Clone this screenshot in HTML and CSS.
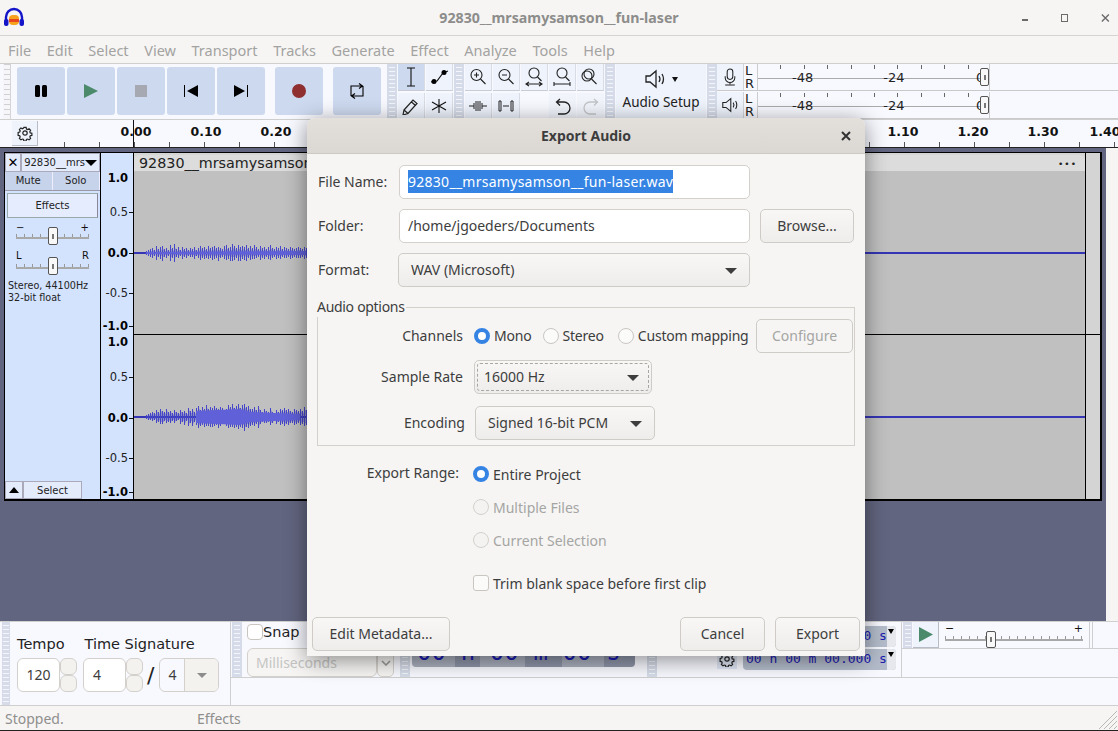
FILE: index.html
```html
<!DOCTYPE html>
<html>
<head>
<title>Export Audio</title>
<link rel="stylesheet" href="styles.css">
</head>
<body>
<svg width="0" height="0" class="defs">
  <symbol id="speaker" viewBox="0 0 22 20">
    <path d="M2 7h4l6-5v16l-6-5H2z" fill="none" stroke="currentColor" stroke-width="1.3"/>
    <path d="M15 7q2 3 0 6M18 5q3 5 0 10" fill="none" stroke="currentColor" stroke-width="1.3"/>
  </symbol>
  <symbol id="mic" viewBox="0 0 20 22">
    <rect x="6.5" y="1" width="7" height="13" rx="3.5" fill="none" stroke="currentColor" stroke-width="1.3"/>
    <path d="M4 10v2a6 6 0 0 0 12 0v-2M10 18v2M4 21h12" fill="none" stroke="currentColor" stroke-width="1.3"/>
  </symbol>
  <symbol id="gear" viewBox="0 0 16 16">
    <path d="M6.6 1.2h2.8l.4 2 1.5.7 1.8-1 1.9 2-1 1.7.6 1.5 2 .5v2.7l-2 .4-.6 1.5 1 1.7-1.9 1.9-1.8-1-1.5.6-.4 2H6.6l-.4-2-1.5-.6-1.8 1-1.9-1.9 1-1.7-.6-1.5-2-.4V7.6l2-.5.6-1.5-1-1.7 1.9-2 1.8 1 1.5-.7z" transform="translate(1.6 1.4) scale(.8)" fill="none" stroke="currentColor" stroke-width="1.5"/>
    <circle cx="8" cy="8" r="2.2" fill="none" stroke="currentColor" stroke-width="1.2"/>
  </symbol>
</svg>

<div class="window">
  <div class="titlebar">
    <svg class="app-logo" width="22" height="22" viewBox="0 0 22 22">
      <rect x="6" y="8" width="10" height="10" rx="4" fill="#f6a21c"/>
      <rect x="6" y="12" width="10" height="3" fill="#e8451c"/>
      <path d="M3 14V10a8 8 0 0 1 16 0v4" fill="none" stroke="#1414c8" stroke-width="2.4"/>
      <rect x="1" y="12" width="4.5" height="7" rx="2" fill="#1414c8"/>
      <rect x="16.5" y="12" width="4.5" height="7" rx="2" fill="#1414c8"/>
    </svg>
    <div class="title-text">92830__mrsamysamson__fun-laser</div>
    <div class="title-controls">
      <span class="wc-min"></span><span class="wc-max"></span>
      <svg width="10" height="10" viewBox="0 0 10 10"><path d="M1 1l8 8M9 1l-8 8" stroke="#6b6b6b" stroke-width="1.6"/></svg>
    </div>
  </div>

  <div class="menubar">
    <span>File</span><span>Edit</span><span>Select</span><span>View</span><span>Transport</span><span>Tracks</span><span>Generate</span><span>Effect</span><span>Analyze</span><span>Tools</span><span>Help</span>
  </div>

  <div class="toolbars">
    <div class="grip grip-first"></div>
    <div class="transport">
      <div class="tbtn"><svg width="14" height="14" viewBox="0 0 14 14"><rect x="1" y="1" width="5" height="12" rx="1.5"/><rect x="8" y="1" width="5" height="12" rx="1.5"/></svg></div>
      <div class="tbtn"><svg width="16" height="16" viewBox="0 0 16 16"><path d="M1 1l14 7-14 7z" fill="#4c8a6c"/></svg></div>
      <div class="tbtn"><svg width="12" height="12" viewBox="0 0 12 12"><rect width="12" height="12" fill="#a6a9b2"/></svg></div>
      <div class="tbtn"><svg width="14" height="14" viewBox="0 0 14 14"><path d="M0 1h1v12H0zM14 1v12L3 7z"/></svg></div>
      <div class="tbtn"><svg width="14" height="14" viewBox="0 0 14 14"><path d="M14 1h-1v12h1zM0 1v12l11-6z"/></svg></div>
      <div class="tbtn tbtn-gap"><svg width="14" height="14" viewBox="0 0 14 14"><circle cx="7" cy="7" r="7" fill="#8f2f30"/></svg></div>
      <div class="tbtn tbtn-gap"><svg width="16" height="18" viewBox="0 0 16 18" fill="none" stroke="#000" stroke-width="1.1"><path d="M2 14V4h11M10 1.500l3.500 2.500-3.500 2.500M14 4v10H3M6 11.500L2.500 14 6 16.500"/></svg></div>
    </div>
    <div class="grip"></div>
    <div class="tools">
      <div class="sbtn sbtn-on"><svg width="12" height="20" viewBox="0 0 12 20" fill="none" stroke="#111" stroke-width="1.1"><path d="M2 1h8M2 19h8M6 1v18"/></svg></div>
      <div class="sbtn"><svg width="22" height="16" viewBox="0 0 22 16"><path d="M3 13l6-1 6-8 5-2" fill="none" stroke="#111" stroke-width="1.2"/><circle cx="6" cy="12.5" r="2.5"/><circle cx="16" cy="3.5" r="2.5"/></svg></div>
      <div class="sbtn"><svg width="18" height="18" viewBox="0 0 18 18" fill="none" stroke="#222" stroke-width="1.2"><path d="M2 13l9-10 4 3.500-9 10-5 1.500zM9.500 5l4 3.500M2 13l4 3.500"/></svg></div>
      <div class="sbtn"><svg width="16" height="16" viewBox="0 0 16 16" fill="none" stroke="#111" stroke-width="1.1"><path d="M8 1v14M1 4l14 8M15 4L1 12"/></svg></div>
    </div>
    <div class="grip"></div>
    <div class="zoomtools">
      <div class="sbtn"><svg width="18" height="18" viewBox="0 0 18 18" fill="none" stroke="#222" stroke-width="1.1"><circle cx="7.5" cy="7" r="5.5"/><path d="M11.500 11l5 5M5 7h5M7.500 4.500v5"/></svg></div>
      <div class="sbtn"><svg width="18" height="18" viewBox="0 0 18 18" fill="none" stroke="#222" stroke-width="1.1"><circle cx="7.5" cy="7" r="5.5"/><path d="M11.500 11l5 5M5 7h5"/></svg></div>
      <div class="sbtn"><svg width="18" height="20" viewBox="0 0 18 20" fill="none" stroke="#222" stroke-width="1.1"><circle cx="9" cy="6" r="5"/><path d="M12.500 10l4 4M1 17h16M4 15l-3 2 3 2M14 15l3 2-3 2"/></svg></div>
      <div class="sbtn"><svg width="18" height="20" viewBox="0 0 18 20" fill="none" stroke="#222" stroke-width="1.1"><circle cx="9" cy="6" r="5"/><path d="M12.500 10l4 4M1 17h16M1 15v4M17 15v4"/></svg></div>
      <div class="sbtn"><svg width="18" height="18" viewBox="0 0 18 18" fill="none" stroke="#222" stroke-width="1.1"><circle cx="8" cy="6" r="5"/><circle cx="6" cy="8" r="5"/><path d="M10.500 11l5 5"/></svg></div>
      <div class="sbtn"><svg width="18" height="14" viewBox="0 0 18 14" fill="none" stroke="#222" stroke-width="1"><path d="M0 7h5M13 7h5M5 4v6M7 2v10M9 2v10M11 2v10M13 4v6"/></svg></div>
      <div class="sbtn"><svg width="18" height="14" viewBox="0 0 18 14" fill="none" stroke="#222" stroke-width="1"><path d="M2 2v10M4 2v10M2 2h2M2 12h2M6 7h6M14 2v10M16 2v10M14 2h2M14 12h2"/></svg></div>
      <div class="sbtn-blank"></div>
      <div class="sbtn sbtn-plain"><svg width="18" height="18" viewBox="0 0 18 18" fill="none" stroke="#222" stroke-width="1.3"><path d="M4 16h6a6 6 0 0 0 0-12H3M6 1L2.500 4 6 7.500"/></svg></div>
      <div class="sbtn sbtn-plain"><svg width="18" height="18" viewBox="0 0 18 18" fill="none" stroke="#c3c5c8" stroke-width="1.3"><path d="M14 16H8a6 6 0 0 1 0-12h7M12 1l3.500 3L12 7.500"/></svg></div>
    </div>
    <div class="grip"></div>
    <div class="audio-setup">
      <div class="as-icon"><svg width="22" height="20"><use href="#speaker"/></svg><span class="as-caret"></span></div>
      <div class="as-label">Audio Setup</div>
    </div>
    <div class="grip"></div>
    <div class="meters">
      <div class="meter-row">
        <div class="meter-btn"><svg width="16" height="18"><use href="#mic"/></svg></div>
        <div class="lr"><span>L</span><span>R</span></div>
        <div class="meter"><span>-48</span><span>-24</span><span class="meter-zero">0</span><i class="thumb thumb-meter"></i></div>
      </div>
      <div class="meter-row">
        <div class="meter-btn"><svg width="18" height="16"><use href="#speaker"/></svg></div>
        <div class="lr"><span>L</span><span>R</span></div>
        <div class="meter"><span>-48</span><span>-24</span><span class="meter-zero">0</span><i class="thumb thumb-meter"></i></div>
      </div>
    </div>
  </div>

  <div class="ruler">
    <div class="ruler-gear"><svg width="16" height="16"><use href="#gear"/></svg></div>
    <div class="ruler-scale">
      <span>0.00</span><span>0.10</span><span>0.20</span><div class="scale-gap"></div><span>1.10</span><span>1.20</span><span>1.30</span><span class="scale-last">1.40</span>
      <i class="playhead"></i>
    </div>
  </div>

  <div class="tracks">
    <div class="track">
      <div class="track-panel">
        <div class="track-head">
          <div class="track-close">&#10005;</div>
          <div class="track-name">92830__mrs<span class="caret-big"></span></div>
        </div>
        <div class="track-btns"><div>Mute</div><div>Solo</div></div>
        <div class="effects-btn">Effects</div>
        <div class="slider-marks"><span>&minus;</span><span>+</span></div>
        <div class="mini-slider"><i class="thumb thumb-mini"></i></div>
        <div class="slider-marks slider-marks-lr"><span>L</span><span>R</span></div>
        <div class="mini-slider"><i class="thumb thumb-mini"></i></div>
        <div class="track-info">Stereo, 44100Hz<br>32-bit float</div>
        <div class="track-foot">
          <div class="collapse-btn"><span class="caret-up"></span></div>
          <div class="select-btn">Select</div>
        </div>
      </div>
      <div class="vruler">
        <div class="vruler-ch vruler-top">
          <b>1.0</b><span>0.5</span><b>0.0</b><span>-0.5</span><b>-1.0</b>
        </div>
        <div class="vruler-ch vruler-bot">
          <b>1.0</b><span>0.5</span><b>0.0</b><span>-0.5</span><b>-1.0</b>
        </div>
      </div>
      <div class="clip-area">
        <div class="clip">
          <div class="clip-title"><span>92830__mrsamysamson__fun-laser</span><span class="clip-menu">&bull;&bull;&bull;</span></div>
          <svg class="wave" width="951" height="328" viewBox="134 171 951 328">
            <path class="wave-line" d="M134 253H1085M134 417H1085"/>
            <path id="ch1" class="wave-spike" d="M146 251V255M148 250V256M150 249V257M152 248V258M154 250V256M156 246V260M158 249V257M160 247V259M162 246V261M164 249V257M166 248V258M168 250V256M170 245V261M172 248V258M174 244V262M176 249V257M178 247V258M180 250V256M182 247V259M184 249V257M186 248V258M188 250V256M190 248V257M192 249V257M194 247V259M196 250V256M198 248V258M200 246V260M202 248V258M204 247V259M206 249V258M208 246V259M210 248V258M212 247V260M214 246V259M216 248V258M218 247V261M220 248V258M222 249V257M224 246V259M226 245V260M228 248V259M230 247V261M232 244V261M234 246V260M236 248V258M238 245V261M240 247V261M242 246V259M244 247V260M246 245V261M248 248V258M250 246V260M252 248V259M254 245V259M256 247V258M258 249V257M260 246V260M262 248V258M264 247V259M266 249V257M268 247V259M270 245V260M272 248V258M274 249V257M276 247V259M278 248V258M280 246V259M282 249V257M284 247V258M286 248V258M288 249V257M290 247V259M292 248V258M294 249V257M296 248V258M298 247V258M300 248V258M302 249V257M304 247V259M306 248V258"/>
            <use href="#ch1" transform="translate(1 126.5) scale(1 .5)"/>
            <path id="ch2" class="wave-spike" d="M146 415V419M148 414V420M150 413V420M152 412V421M154 413V420M156 410V423M158 412V422M160 409V424M162 411V424M164 412V421M166 409V423M168 412V422M170 411V423M172 413V421M174 410V423M176 412V421M178 413V420M180 410V424M182 412V422M184 411V425M186 413V421M188 408V426M190 411V423M192 409V426M194 412V422M196 408V425M198 406V428M200 410V426M202 407V425M204 409V427M206 405V426M208 409V426M210 407V427M212 408V427M214 406V426M216 408V425M218 409V428M220 407V426M222 408V424M224 411V424M226 409V426M228 405V428M230 407V427M232 404V427M234 408V428M236 406V427M238 404V429M240 408V427M242 405V428M244 404V431M246 407V427M248 406V428M250 409V426M252 409V425M254 407V426M256 410V424M258 406V428M260 410V424M262 412V422M264 409V423M266 411V423M268 412V422M270 408V425M272 412V423M274 413V421M276 410V424M278 412V422M280 409V425M282 410V424M284 408V426M286 410V424M288 409V425M290 411V423M292 412V423M294 409V425M296 410V424M298 411V423M300 409V425M302 411V424M304 407V426M306 410V425"/>
            <use href="#ch2" transform="translate(1 125.1) scale(1 .7)"/>
            <path class="wave-body" d="M196 411L240 409 250 412 300 414V420L250 422 240 425 196 423Z"/>
            <path class="wave-body" d="M146 252L306 251V255L146 254Z"/>
          </svg>
        </div>
        <div class="clip-rest"></div>
      </div>
    </div>
    <div class="vscroll"></div>
  </div>

  <div class="bottom-bars">
    <div class="time-bar">
      <div class="grip grip-tall"></div>
      <div class="time-sig">
        <div class="ts-labels"><span>Tempo</span><span>Time Signature</span></div>
        <div class="ts-fields">
          <div class="spin"><div class="spin-val spin-tempo">120</div><div class="spin-btns"><i></i><i></i></div></div>
          <div class="spin"><div class="spin-val spin-num">4</div><div class="spin-btns"><i></i><i></i></div></div>
          <span class="ts-slash">/</span>
          <div class="ts-den"><span>4</span><div class="ts-arrow"><span class="caret-grey"></span></div></div>
        </div>
      </div>
    </div>
    <div class="bottom-right">
      <div class="bottom-top">
        <div class="snap-bar">
          <div class="grip grip-snap"></div>
          <div class="snap-body">
            <div class="snap-row"><i class="snap-check"></i><span>Snap</span></div>
            <div class="snap-combo-row">
              <div class="snap-combo">Milliseconds</div>
              <div class="snap-drop"><svg width="10" height="6" viewBox="0 0 10 6" fill="none" stroke="#9a9a98" stroke-width="1.6"><path d="M1 1l4 4 4-4"/></svg></div>
            </div>
          </div>
        </div>
        <div class="grip grip-snap grip-big"></div>
        <div class="bigtime">00 h 00 m 00 s</div>
        <div class="grip grip-snap grip-sel"></div>
        <div class="seltime">
          <div class="seltime-row"><div class="seltime-val">00 h 00 m 00.000 s<i class="seltime-caret"></i></div></div>
          <div class="seltime-row"><div class="seltime-gear"><svg width="16" height="16"><use href="#gear"/></svg></div><div class="seltime-val">00 h 00 m 00.000 s<i class="seltime-caret"></i></div></div>
        </div>
        <div class="play-col">
          <div class="play-bar">
            <div class="grip grip-play"></div>
            <div class="play-btn"><svg width="14" height="15" viewBox="0 0 14 15"><path d="M0 0l14 7.5L0 15z" fill="#4c8a6c"/></svg></div>
            <div class="speed">
              <div class="slider-marks"><span>&minus;</span><span>+</span></div>
              <div class="mini-slider"><i class="thumb thumb-speed"></i></div>
            </div>
            <div class="play-end"></div>
          </div>
        </div>
      </div>
      <div class="bottom-lower"></div>
    </div>
  </div>

  <div class="statusbar">
    <span class="status-stopped">Stopped.</span><span>Effects</span>
    <svg class="resize-grip" width="22" height="22" viewBox="0 0 22 22" fill="none" stroke="#b9b9b6"><path d="M21 3L3 21M21 8L8 21M21 13L13 21M21 18L18 21"/></svg>
  </div>
</div>

<!-- dialog sits over the main window -->
<div class="dialog">
  <div class="dlg-head">
    <div class="dlg-title">Export Audio</div>
    <svg class="dlg-close" width="10" height="10" viewBox="0 0 10 10"><path d="M1 1l8 8M9 1l-8 8" stroke="#333" stroke-width="2"/></svg>
  </div>
  <div class="dlg-body">
    <div class="form-row">
      <label class="form-label">File Name:</label>
      <div class="entry entry-file"><span class="selected">92830__mrsamysamson__fun-laser.wav</span></div>
    </div>
    <div class="form-row form-row-folder">
      <label class="form-label">Folder:</label>
      <div class="entry entry-file">/home/jgoeders/Documents</div>
      <div class="btn btn-browse">Browse...</div>
    </div>
    <div class="form-row form-row-format">
      <label class="form-label">Format:</label>
      <div class="combo combo-format">WAV (Microsoft)<span class="caret-down"></span></div>
    </div>

    <div class="frame">
      <div class="frame-legend">Audio options</div>
      <div class="frame-row">
        <label class="opt-label">Channels</label>
        <div class="radio radio-on"></div><span class="radio-text">Mono</span>
        <div class="radio radio-stereo"></div><span class="radio-text">Stereo</span>
        <div class="radio radio-custom"></div><span class="radio-text">Custom mapping</span>
        <div class="btn btn-config">Configure</div>
      </div>
      <div class="frame-row frame-row-rate">
        <label class="opt-label">Sample Rate</label>
        <div class="combo combo-rate"><span class="focus-ring"></span>16000 Hz<span class="caret-down"></span></div>
      </div>
      <div class="frame-row frame-row-enc">
        <label class="opt-label opt-label-enc">Encoding</label>
        <div class="combo combo-enc">Signed 16-bit PCM<span class="caret-down"></span></div>
      </div>
    </div>

    <div class="range">
      <label class="range-label">Export Range:</label>
      <div class="range-opts">
        <div class="range-opt"><div class="radio radio-on"></div><span>Entire Project</span></div>
        <div class="range-opt range-off"><div class="radio"></div><span>Multiple Files</span></div>
        <div class="range-opt range-off"><div class="radio"></div><span>Current Selection</span></div>
        <div class="range-opt range-trim"><div class="check"></div><span>Trim blank space before first clip</span></div>
      </div>
    </div>

    <div class="dlg-foot">
      <div class="btn btn-meta">Edit Metadata...</div>
      <div class="btn btn-foot btn-cancel">Cancel</div>
      <div class="btn btn-foot">Export</div>
    </div>
  </div>
</div>
</body>
</html>
```

FILE: styles.css
```css
html, body {
	margin: 0;
	padding: 0;
	height: 731px;
	overflow: hidden;
	background: #f6f5f4;
}
.defs { position: absolute; }
.window {
	width: 1118px;
	height: 731px;
	display: flex;
	flex-direction: column;
	font-family: "Noto Sans", sans-serif;
	color: #2e3436;
}

/* title + menu */
.titlebar {
	height: 35px;
	flex: none;
	display: flex;
	align-items: center;
	padding: 0 8px 0 3px;
	border-bottom: 1px solid #d6d4d1;
}
.title-text {
	flex: 1;
	text-align: center;
	font-size: 14.200px;
	font-weight: 700;
	color: #8d8d8b;
	margin-left: 71px;
}
.title-controls { width: 88px; display: flex; align-items: center; justify-content: flex-end; gap: 33px; }
.wc-min { width: 7px; height: 2px; background: #6b6b6b; margin-top: 5px; }
.wc-max { width: 6px; height: 6px; border: 1.5px solid #6b6b6b; }
.menubar {
	height: 27px;
	flex: none;
	display: flex;
	align-items: center;
	gap: 15.600px;
	padding-left: 8px;
	font-size: 14.500px;
	color: #a3a3a1;
}

/* top toolbars */
.toolbars {
	height: 55px;
	flex: none;
	display: flex;
	background: #f8f9ff;
	border-top: 1px solid #cfcfcf;
	border-bottom: 1px solid #cfcfcf;
	overflow: hidden;
}
.grip {
	width: 10px;
	flex: none;
	box-sizing: border-box;
	background: #d5dbe8 repeating-linear-gradient(to bottom, transparent 0, transparent 3px, #f4f6fb 3px, #f4f6fb 4px) center / 6px 100% no-repeat;
	margin-right: 1px;
}
.grip-first {
	margin-left: 3px;
	width: 8px;
	background: #f6f6fa repeating-linear-gradient(to bottom, #d0d0d0 0, #d0d0d0 1px, transparent 1px, transparent 5px) center / 6px 100% no-repeat;
	border-right: 1px solid #d5d5d5;
}
.transport {
	display: flex;
	padding: 3px 6px 0 5px;
	gap: 2px;
}
.tbtn {
	width: 48px;
	height: 48px;
	background: #cdd9ef;
	border-radius: 3px;
	display: flex;
	align-items: center;
	justify-content: center;
}
.tbtn-gap { margin-left: 8px; }
.tools {
	display: grid;
	grid-template-columns: 27px 27px;
	grid-auto-rows: 27px;
	gap: 2px 1px;
	width: 56px;
	flex: none;
}
.zoomtools {
	display: grid;
	grid-template-columns: repeat(5, 27px);
	grid-auto-rows: 27px;
	gap: 2px 1px;
	width: 140px;
	flex: none;
}
.sbtn {
	display: flex;
	align-items: center;
	justify-content: center;
	background: #eef3fc;
	border-right: 1px solid #d8dce4;
	border-bottom: 1px solid #c9ccd4;
	box-sizing: border-box;
}
.sbtn-on { background: #cdd9ef; }
.sbtn-plain { background: #f1f4fb; border: 0; }
.audio-setup {
	width: 90px;
	flex: none;
	margin-right: 1px;
	background: #eef3fc;
	text-align: center;
	font-size: 13.500px;
	color: #222;
}
.as-icon { height: 28px; display: flex; align-items: center; justify-content: center; gap: 6px; padding-top: 2px; box-sizing: border-box; }
.as-caret { width: 0; height: 0; border: 3.5px solid transparent; border-top: 5px solid #111; border-bottom: 0; }
.as-label { white-space: nowrap; line-height: 20px; }
.meters { flex: 1; display: flex; flex-direction: column; margin-left: -1px; }
.meter-row { height: 27px; flex: none; display: flex; margin-bottom: 1px; border-bottom: 1px solid #c9c9c9; box-sizing: border-box; }
.meter-btn {
	width: 27px;
	flex: none;
	display: flex;
	align-items: center;
	justify-content: center;
	background: #eef3fc;
	border-right: 1px solid #d0d3da;
	box-sizing: border-box;
	color: #222;
}
.lr {
	width: 12px;
	flex: none;
	margin-left: 1px;
	display: flex;
	flex-direction: column;
	font: 13px/13px "DejaVu Sans", sans-serif;
	color: #222;
}
.meter {
	position: relative;
	width: 233px;
	height: 26px;
	display: flex;
	font: 13px/28px "DejaVu Sans", sans-serif;
	color: #222;
	padding-left: 34px;
	box-sizing: border-box;
	gap: 70px;
	background:
		linear-gradient(#aaa, #aaa) 0 14px / 97% 1px no-repeat,
		repeating-linear-gradient(to right, transparent 0, transparent 22.4px, #666 22.4px, #666 23.4px) 0 1px / 100% 4px no-repeat;
	border-left: 1px solid #ccc;
	border-right: 1px solid #ccc;
}
.meter-zero { position: absolute; left: 218px; }
.thumb {
	position: absolute;
	display: block;
	box-sizing: border-box;
	background: #f8f8f8 linear-gradient(#777, #777) center / 2px 5px no-repeat;
	border: 1px solid #555;
	border-radius: 2px;
}
.thumb-meter { right: 0; top: 4px; width: 9px; height: 18px; }

/* timeline */
.ruler {
	height: 27px;
	flex: none;
	display: flex;
	background: #f8f9ff;
	border-bottom: 1px solid #222;
}
.ruler-gear {
	margin: 1px 0 0 12px;
	width: 26px;
	height: 25px;
	display: flex;
	align-items: center;
	justify-content: center;
	background: #eef3fc;
	border-right: 1px solid #b8bcc6;
	border-bottom: 1px solid #b8bcc6;
	box-sizing: border-box;
	color: #222;
	flex: none;
}
.ruler-scale {
	position: relative;
	flex: 1;
	display: flex;
	overflow: hidden;
	padding-left: 63px;
	font: 700 12.500px/23px "DejaVu Sans", sans-serif;
	color: #111;
	background: repeating-linear-gradient(to right, #555 0, #555 1px, transparent 1px, transparent 35px) 26px 100% / 100% 5px repeat-x;
}
.ruler-scale span { width: 70px; flex: none; text-align: center; }
.scale-gap { width: 557px; flex: none; }
.ruler-scale .scale-last { margin-left: -8px; }
.playhead { position: absolute; left: 95px; top: 0; width: 1px; height: 27px; background: #111; }

/* track */
.tracks {
	flex: 1;
	min-height: 0;
	display: flex;
	background: #62657f;
}
.track {
	width: 1098px;
	height: 349px;
	margin: 4px 4px 0 4px;
	display: flex;
	border: solid #000;
	border-width: 1px 2px 2px 1px;
	background: #000;
	box-sizing: border-box;
	flex: none;
}
.track-panel {
	position: relative;
	width: 95px;
	flex: none;
	background: #d3e2fd;
	font-family: "DejaVu Sans", sans-serif;
	font-size: 10px;
	color: #222;
}
.track-head { display: flex; height: 19px; }
.track-close {
	width: 18px;
	text-align: center;
	font-size: 13px;
	font-weight: 700;
	line-height: 18px;
	background: #e4ecfc;
	border: 1px solid #aab;
	box-sizing: border-box;
	color: #000;
}
.track-name {
	flex: 1;
	display: flex;
	align-items: center;
	justify-content: space-between;
	padding: 0 2px;
	font-size: 10px;
	background: #e4ecfc;
	border: 1px solid #aab;
	box-sizing: border-box;
}
.caret-big { width: 0; height: 0; border: 6px solid transparent; border-top: 6px solid #000; border-bottom: 0; }
.track-btns { display: flex; height: 18px; line-height: 17px; text-align: center; border-bottom: 1px solid #99a; }
.track-btns div { flex: 1; background: #c6d3ea; border-right: 1px solid #eef; }
.effects-btn {
	height: 25px;
	line-height: 23px;
	margin: 2px 2px 0;
	text-align: center;
	background: #e4ecfe;
	border: 1px solid #9aa;
	border-right-color: #889;
	box-sizing: border-box;
}
.slider-marks { display: flex; justify-content: space-between; padding: 0 11px; height: 10px; line-height: 10px; margin-top: 5px; font-size: 10px; color: #111; }
.slider-marks-lr { margin-top: 6px; margin-bottom: 2px; }
.mini-slider {
	position: relative;
	height: 12px;
	margin: 0 11px;
	background:
		linear-gradient(#a8a8a8, #a8a8a8) 0 4px / 100% 2px no-repeat,
		repeating-linear-gradient(to right, #999 0, #999 1px, transparent 1px, transparent 8px) 0 1px / 100% 3px no-repeat;
}
.thumb-mini { left: 32px; top: -6px; width: 10px; height: 18px; }
.track-info { margin: 5px 0 0 3px; font-size: 9.600px; line-height: 12px; color: #222; }
.track-foot { position: absolute; left: 0; bottom: 0; display: flex; height: 18px; }
.collapse-btn { width: 18px; display: flex; align-items: center; justify-content: center; background: #e4ecfc; border: 1px solid #aab; box-sizing: border-box; }
.caret-up { width: 0; height: 0; border: 5.5px solid transparent; border-bottom: 6px solid #000; border-top: 0; }
.select-btn { width: 59px; text-align: center; line-height: 17px; background: #e4ecfc; border: 1px solid #aab; box-sizing: border-box; }
.vruler {
	width: 33px;
	flex: none;
	margin-left: 1px;
	background: #d3e2fd;
	border-right: 1px solid #000;
	box-sizing: border-box;
}
.vruler-ch {
	display: grid;
	justify-items: end;
	font: 11.500px/14px "DejaVu Sans", sans-serif;
	color: #222;
}
.vruler-top { height: 181px; padding-top: 18px; grid-template-rows: 34px 41px 40px 33px 14px; box-sizing: border-box; }
.vruler-bot { height: 165px; padding-top: 1px; grid-template-rows: 35px 41px 40px 34px 14px; box-sizing: border-box; }
.vruler-ch b { color: #000; }
.vruler-ch > *::after {
	content: "";
	display: inline-block;
	width: 4px;
	height: 1px;
	margin-left: 1px;
	vertical-align: middle;
	background: #111;
}
.vruler-ch > :first-child::after { background: transparent; }
.clip-area { position: relative; flex: 1; display: flex; min-width: 0; background: #000; overflow: hidden; }
.clip-area::after { content: ""; position: absolute; left: 0; right: 0; top: 181px; height: 1px; background: #000; }
.clip { width: 951px; flex: none; background: #d4d4d4; }
.clip-title {
	height: 16px;
	margin-top: 2px;
	display: flex;
	justify-content: space-between;
	padding: 0 6px 0 5px;
	background: #dcdcdc;
	border-radius: 5px 5px 0 0;
	font: 14.300px/16px "DejaVu Sans", sans-serif;
	color: #222;
}
.clip-menu { font-size: 9px; letter-spacing: 1px; line-height: 19px; padding-right: 2px; }
.wave { display: block; background: #c0c0c0; }
.wave-line { stroke: #3535b5; stroke-width: 2; fill: none; shape-rendering: crispEdges; }
.wave-spike { stroke: #4646c8; stroke-width: 1; fill: none; shape-rendering: crispEdges; }
.wave-body { fill: #6060d8; }
.clip-rest { flex: 1; margin-left: 1px; background: #d4d4d4; }
.vscroll { flex: 1; background: #f6f5f4; }

/* lower toolbars */
.bottom-bars {
	height: 83px;
	flex: none;
	display: flex;
	background: #f8f9ff;
	border-top: 1px solid #d0d0d0;
	border-bottom: 1px solid #cfcfcf;
}
.time-bar { flex: none; display: flex; border-right: 1px solid #cfcfcf; padding-left: 2px; box-sizing: border-box; width: 231px; }
.grip-tall { width: 8px; margin-right: 0; }
.time-sig { padding: 13px 0 0 7px; }
.ts-labels { display: flex; gap: 20px; font: 14.500px/18px "DejaVu Sans", sans-serif; color: #222; }
.ts-fields { display: flex; align-items: center; margin-top: 5px; font-size: 14px; color: #3d3d3d; }
.spin { display: flex; margin-right: 6px; }
.spin-val { width: 43px; height: 34px; line-height: 32px; border: 1px solid #d4d1cc; border-radius: 6px; box-sizing: border-box; background: #fff; }
.spin-tempo { text-align: center; }
.spin-num { padding-left: 9px; }
.spin-btns { width: 17px; display: flex; flex-direction: column; }
.spin-btns i { flex: 1; background: #f4f2ef; border: 1px solid #d4d1cc; border-radius: 6px; }
.ts-slash { font: 22px "DejaVu Sans", sans-serif; margin: 0 5px 0 -2px; color: #222; }
.ts-den { width: 60px; height: 34px; display: flex; border: 1px solid #d4d1cc; border-radius: 6px; box-sizing: border-box; line-height: 32px; padding-left: 8px; }
.ts-den > span { width: 16px; }
.ts-arrow { flex: 1; border-left: 1px solid #d4d1cc; display: flex; align-items: center; justify-content: center; background: #f4f2ef; border-radius: 0 5px 5px 0; }
.caret-grey { width: 0; height: 0; border: 5.5px solid transparent; border-top: 5.5px solid #8c8c8c; border-bottom: 0; }
.bottom-right { flex: 1; display: flex; flex-direction: column; min-width: 0; }
.bottom-top { height: 55px; flex: none; display: flex; border-bottom: 1px solid #cfcfcf; }
.snap-bar { width: 169px; flex: none; display: flex; }
.grip-snap { width: 10px; height: 55px; margin-left: 1px; margin-right: 0; }
.snap-body { padding: 2px 0 0 5px; }
.snap-row { display: flex; align-items: center; height: 16px; font: 14.500px "DejaVu Sans", sans-serif; color: #222; }
.snap-check { width: 16px; height: 16px; border: 1px solid #c9c6c2; border-radius: 4px; box-sizing: border-box; background: #fff; }
.snap-combo-row { display: flex; margin-top: 8px; }
.snap-combo { width: 130px; height: 29px; line-height: 27px; padding-left: 8px; font-size: 14px; color: #c5c5c3; background: #f6f5f4; border: 1px solid #d4d1cc; border-radius: 6px; box-sizing: border-box; }
.snap-drop { width: 17px; height: 29px; display: flex; align-items: center; justify-content: center; background: #f6f5f4; border: 1px solid #d4d1cc; border-radius: 5px; box-sizing: border-box; }
.grip-big { margin-left: 0; }
.bigtime {
	width: 223px;
	height: 37px;
	flex: none;
	margin: 8px 0 0 2px;
	padding-left: 5px;
	box-sizing: border-box;
	overflow: hidden;
	background:
		linear-gradient(to right, #a9afbd 43px, #8f95a8 43px, #8f95a8 68px, #a9afbd 68px, #a9afbd 113px, #8f95a8 113px, #8f95a8 150px, #a9afbd 150px, #a9afbd 192px, #8f95a8 192px);
	border-radius: 0 0 4px 4px;
	font: 24px/44px "DejaVu Sans Mono", monospace;
	letter-spacing: .1px;
	white-space: nowrap;
	color: #1a1ab0;
}
.grip-sel { margin-left: 12px; }
.seltime { width: 239px; flex: none; padding-top: 4px; box-sizing: border-box; }
.seltime-row { display: flex; height: 23px; justify-content: flex-end; align-items: flex-start; }
.seltime-gear { width: 20px; height: 20px; margin-right: 6px; display: flex; align-items: center; justify-content: center; background: #dfe6f4; color: #222; }
.seltime-val { position: relative; width: 153px; height: 21px; background: #b4bccb; border-radius: 4px; font: 13px/20px "DejaVu Sans Mono", monospace; color: #1a1ab0; white-space: nowrap; padding-left: 3px; box-sizing: border-box; overflow: hidden; }
.seltime-caret { position: absolute; right: 0; top: 0; width: 9px; height: 100%; background: #e6e8ee; }
.seltime-caret::after { content: ""; position: absolute; left: 1px; top: 3px; border: 3.5px solid transparent; border-top: 5px solid #000; border-bottom: 0; }
.play-col { flex: 1; min-width: 0; border-left: 1px solid #cfcfcf; margin-left: 5px; }
.play-bar { display: flex; height: 26px; border-bottom: 1px solid #cfcfcf; }
.grip-play { width: 9px; margin-left: 1px; height: 26px; }
.play-btn { width: 26px; height: 26px; display: flex; align-items: center; justify-content: center; background: #eef3fc; border-right: 1px solid #b8bcc6; border-bottom: 1px solid #b8bcc6; box-sizing: border-box; flex: none; }
.speed { width: 138px; margin-left: 6px; flex: none; }
.speed .slider-marks { padding: 0; margin-top: 2px; font-family: "DejaVu Sans", sans-serif; font-size: 11px; color: #111; }
.speed .mini-slider { margin: 0; height: 12px; background-position: 0 5px, 0 2px; }
.thumb-speed { left: 41px; top: -3px; width: 10px; height: 17px; }
.play-end { width: 2px; margin-left: 6px; border-left: 1px solid #cfcfcf; border-right: 1px solid #cfcfcf; }
.bottom-lower { flex: 1; }
.statusbar {
	position: relative;
	height: 24px;
	flex: none;
	display: flex;
	align-items: center;
	padding-left: 5px;
	font-size: 14px;
	color: #8f8f8d;
	border-bottom: 1px solid #222;
}
.status-stopped { width: 192px; }
.resize-grip { position: absolute; right: 0; bottom: 0; }

/* Export Audio dialog */
.dialog {
	position: absolute;
	left: 307px;
	top: 118px;
	width: 558px;
	height: 538px;
	background: #f6f5f4;
	border-radius: 8px 8px 0 0;
	box-shadow: 0 4px 22px rgba(0, 0, 0, .45);
	font-family: "Noto Sans", sans-serif;
	font-size: 14px;
	color: #3d3d3d;
}
.dlg-head {
	position: relative;
	height: 35px;
	background: linear-gradient(#e3e0dc, #dbd8d4);
	border-radius: 8px 8px 0 0;
	border-bottom: 1px solid #cdc9c4;
}
.dlg-title { text-align: center; font-weight: 700; font-size: 14px; line-height: 35px; color: #3d3d3d; }
.dlg-close { position: absolute; right: 14px; top: 13px; }
.dlg-body { padding: 11px 11px 0 11px; }
.form-row { display: flex; align-items: center; height: 34px; }
.form-row-folder { margin-top: 10px; }
.form-row-format { margin-top: 10px; }
.form-label { width: 81px; flex: none; margin-top: -2px; }
.entry {
	height: 34px;
	line-height: 31px;
	padding-left: 8px;
	background: #fff;
	border: 1px solid #d4d1cc;
	border-radius: 5px;
	box-sizing: border-box;
	white-space: nowrap;
}
.entry-file { width: 351px; }
.selected { background: #3584e4; color: #fff; padding: 2px 0; letter-spacing: .27px; }
.btn {
	display: flex;
	align-items: center;
	justify-content: center;
	height: 34px;
	padding-bottom: 2px;
	background: linear-gradient(#f8f7f6, #eeedeb);
	border: 1px solid #cfccc7;
	border-radius: 5px;
	box-sizing: border-box;
}
.btn-browse { width: 94px; margin-left: 10px; }
.combo {
	position: relative;
	height: 34px;
	line-height: 31px;
	padding-left: 12px;
	background: linear-gradient(#f8f7f6, #eeedeb);
	border: 1px solid #cfccc7;
	border-radius: 5px;
	box-sizing: border-box;
	white-space: nowrap;
}
.combo-format { width: 352px; margin-left: -1px; }
.caret-down {
	position: absolute;
	right: 12px;
	top: 14px;
	width: 0;
	height: 0;
	border: 6px solid transparent;
	border-top: 6px solid #3d3d3d;
	border-bottom: 0;
}
.frame {
	position: relative;
	margin: 20px 0 0 -1px;
	width: 538px;
	height: 139px;
	border: 1px solid #d4d1cc;
	box-sizing: border-box;
}
.frame-legend { position: absolute; left: -1px; top: -11px; padding-right: 1px; background: #f6f5f4; line-height: 20px; letter-spacing: -.3px; }
.frame-row { display: flex; align-items: center; height: 34px; margin-top: 11px; position: relative; }
.frame-row-rate { margin-top: 7px; }
.frame-row-enc { margin-top: 12px; }
.opt-label { width: 145px; text-align: right; flex: none; margin-top: -2px; }
.opt-label-enc { width: 147px; }
.radio {
	width: 16px;
	height: 16px;
	flex: none;
	border: 1px solid #c9c6c2;
	border-radius: 50%;
	background: #fbfbfa;
	box-sizing: border-box;
}
.radio-on { border: 4.5px solid #3584e4; background: #fff; }
.frame-row .radio { margin-left: 11px; }
.frame-row .radio-stereo { margin-left: 11px; }
.frame-row .radio-custom { margin-left: 14px; }
.radio-text { margin: -2px 0 0 4px; white-space: nowrap; letter-spacing: -.2px; }
.btn-config { position: absolute; right: 1px; width: 97px; color: #a5a5a3; background: #f6f5f4; }
.combo-rate { width: 178px; margin-left: 11px; padding-left: 9px; }
.combo-enc { width: 180px; margin-left: 10px; }
.focus-ring { position: absolute; inset: 2px; border: 1px dashed #a8a6a2; border-radius: 3px; }
.range { display: flex; margin-top: 17px; }
.range-label { width: 141px; text-align: right; flex: none; line-height: 20px; }
.range-opts { margin-left: 14px; }
.range-opt { display: flex; align-items: center; gap: 4px; height: 22px; margin-bottom: 11px; white-space: nowrap; }
.range-off { color: #a5a5a3; }
.range-off .radio { background: #f4f3f1; border-color: #d4d1cc; }
.range-trim { margin-top: 21px; }
.check { width: 16px; height: 16px; border: 1px solid #c9c6c2; border-radius: 3px; background: #fbfbfa; box-sizing: border-box; }
.dlg-foot { position: absolute; left: 5px; right: 5px; bottom: 5px; display: flex; }
.btn-meta { width: 138px; margin-right: auto; }
.btn-foot { width: 85px; }
.btn-cancel { margin-right: 10px; }
```
